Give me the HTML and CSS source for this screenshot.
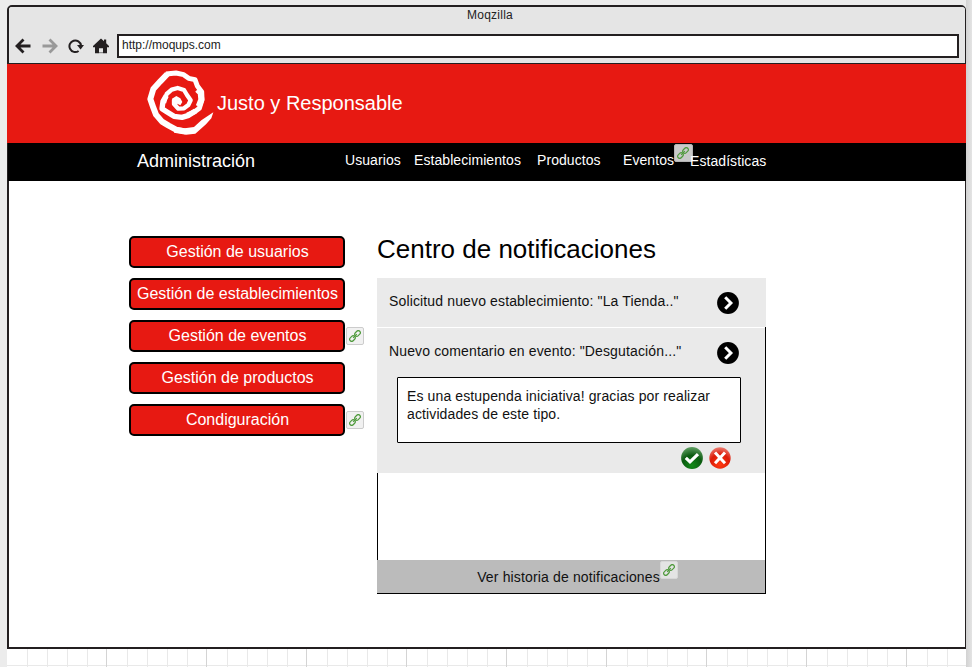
FILE: index.html
```html
<!DOCTYPE html>
<html lang="es">
<head>
<meta charset="utf-8">
<title>Justo y Responsable</title>
<link rel="stylesheet" href="styles.css">
</head>
<body>
<svg class="defs" width="0" height="0">
  <defs>
    <radialGradient id="green" cx="50%" cy="85%" r="85%"><stop offset="0" stop-color="#128a18"/><stop offset=".55" stop-color="#0b5a10"/><stop offset="1" stop-color="#5f9e62"/></radialGradient>
    <radialGradient id="red" cx="50%" cy="80%" r="85%"><stop offset="0" stop-color="#ff3a10"/><stop offset=".55" stop-color="#dc1c08"/><stop offset="1" stop-color="#ee8a80"/></radialGradient>
    <symbol id="link" viewBox="0 0 14 14">
      <g transform="rotate(-45 7 7)" fill="none" stroke="#4f9a3c" stroke-width="1.4">
        <rect x="-0.8" y="4.600" width="7.200" height="4.800" rx="2.400"/><rect x="7.600" y="4.600" width="7.200" height="4.800" rx="2.400"/><path d="M4 7h6"/>
      </g>
    </symbol>
    <symbol id="chevron" viewBox="0 0 22 22">
      <circle cx="11" cy="11" r="10.900"/><path d="M8.200 5.300 13.900 11l-5.700 5.700" fill="none" stroke="#fff" stroke-width="3"/>
    </symbol>
  </defs>
</svg>
<div class="canvas">
  <div class="window">
    <header class="chrome">
      <div class="title">Moqzilla</div>
      <div class="toolbar">
        <svg class="tool back" viewBox="0 0 16 16"><path d="M8.500 1.500 2 8l6.500 6.500M2 8h13.500" fill="none" stroke="#231f20" stroke-width="2.800"/></svg>
        <svg class="tool forward" viewBox="0 0 16 16"><path d="M7.500 1.500 14 8l-6.500 6.500M14 8H.5" fill="none" stroke="#999" stroke-width="2.800"/></svg>
        <svg class="tool reload" viewBox="0 0 16 16"><path d="M10.600 13A5.800 5.800 0 1 1 13 7.500" fill="none" stroke="#231f20" stroke-width="2"/><path d="M9 7h7l-3.400 4.600z" fill="#231f20"/></svg>
        <svg class="tool home" viewBox="0 0 16 16"><path d="M8 .5 11 3.200V1.500h2.200v3.700L16 8v1.200h-2V15.200h-4v-5H6v5H2V9.200H0V8z" fill="#231f20"/><path d="M6 14.700H10" stroke="#777"/></svg>
        <div class="address">http://moqups.com</div>
      </div>
    </header>
    <div class="brand">
      <svg class="logo" viewBox="0 0 204 201" fill="none" stroke="#fff" stroke-linejoin="round">
        <path stroke-width="18" d="M64 15 43 37 22 60 13 90 22 116 30 137 48 158 68 170 90 182 118 187"/>
        <path stroke-width="15" d="M60 15 90 12 113 17 128 28 147 32 154 51 167 68 168 92 160 118 146 128 124 138"/>
        <path stroke-width="18" d="M154 62 164 72 166 92 158 112"/>
        <path stroke-width="16" d="M148 126 128 139 108 145 84 142 62 128 48 119 51 97 61 80"/>
        <path stroke-width="13" d="M54 102 62 75 77 62 95 57 114 63 123 78 134 94 127 108 114 118 97 119 84 105 84 92"/>
        <path fill="#fff" stroke="none" d="M78 89 91 81 103 88 109 99 103 109 94 104 93 119 80 107ZM202 130 196 148 180 166 164 180 148 194 120 197 84 191 89 174 116 178 144 174 166 154 184 142Z"/>
      </svg>
      <span class="brand-name">Justo y Responsable</span>
    </div>
    <nav class="nav">
      <span class="section">Administración</span>
      <a class="n1">Usuarios</a><a class="n2">Establecimientos</a><a class="n3">Productos</a><a class="n4">Eventos<i class="badge dim"><svg><use href="#link"/></svg></i></a><a class="n5">Estadísticas</a>
    </nav>
    <main class="content">
      <aside class="menu">
        <a class="button"><span>Gestión de usuarios</span></a>
        <a class="button"><span>Gestión de establecimientos</span></a>
        <a class="button"><span>Gestión de eventos</span><i class="badge"><svg><use href="#link"/></svg></i></a>
        <a class="button"><span>Gestión de productos</span></a>
        <a class="button"><span>Condiguración</span><i class="badge"><svg><use href="#link"/></svg></i></a>
      </aside>
      <section class="center">
        <h1>Centro de notificaciones</h1>
        <div class="item"><span>Solicitud nuevo establecimiento: "La Tienda.."</span><svg class="go"><use href="#chevron"/></svg></div>
        <div class="rest">
          <div class="item open">
            <div class="row"><span>Nuevo comentario en evento: "Desgutación..."</span><svg class="go"><use href="#chevron"/></svg></div>
            <div class="comment">Es una estupenda iniciativa! gracias por realizar<br>actividades de este tipo.</div>
            <div class="actions">
              <svg viewBox="0 0 22 22"><circle cx="11" cy="11" r="10.900" fill="url(#green)"/><path d="m4.800 10.800 4.200 4 8-7.600" fill="none" stroke="#fff" stroke-width="3.200"/></svg>
              <svg viewBox="0 0 22 22"><circle cx="11" cy="11" r="10.700" fill="url(#red)"/><path d="m6 5.500 10 10.800m0-10.800L6 16.300" fill="none" stroke="#fff" stroke-width="3"/></svg>
            </div>
          </div>
          <div class="blank"></div>
          <div class="history"><span>Ver historia de notificaciones<i class="badge"><svg><use href="#link"/></svg></i></span></div>
        </div>
      </section>
    </main>
  </div>
</div>
</body>
</html>
```
FILE: styles.css
```css
* { box-sizing: border-box; }
html, body { margin: 0; height: 667px; overflow: hidden; }
body {
  background: linear-gradient(90deg, #ececec 0 966px, #d2d2d2 966px, #e4e4e4 972px);
  font-family: "Liberation Sans", Arial, sans-serif;
  color: #000;
  padding: 0 6px 0 7px;
}
.defs { display: block; height: 0; }
.canvas {
  width: 959px;
  height: 667px;
  padding-top: 5px;
  background:
    linear-gradient(#ececec, #ececec) 0 0 / 100% 20px no-repeat,
    repeating-linear-gradient(90deg, transparent 0 99px, #d4d4d4 99px 100px),
    linear-gradient(#e9e9e9, #e9e9e9) 0 665px / 100% 1px no-repeat,
    repeating-linear-gradient(90deg, transparent 0 20px, #e9e9e9 20px 21px, transparent 21px 40px, #e9e9e9 40px 41px, transparent 41px 60px, #e9e9e9 60px 61px, transparent 61px 80px, #e9e9e9 80px 81px, transparent 81px 100px),
    #fff;
}
.window {
  height: 644px;
  display: flex;
  flex-direction: column;
  background: #fff;
  border: solid #231f20;
  border-width: 2px 1px 2px 2px;
  border-radius: 5px 5px 0 0;
}
.chrome { height: 57px; background: #e5e5e5; border-bottom: 1px solid #231f20; border-radius: 3px 3px 0 0; }
.title { height: 27px; padding: 0 5px 0 11px; line-height: 17px; font-size: 12px; text-align: center; letter-spacing: .25px; color: #222; }
.toolbar { display: flex; height: 24px; align-items: center; padding: 0 6px; }
.tool { width: 16px; height: 16px; flex: none; }
.forward { margin-left: 11px; }
.reload { margin-left: 10px; }
.home { margin-left: 9px; }
.address { flex: 1; margin-left: 8px; height: 24px; border: 2px solid #231f20; background: #fff; padding-left: 3px; font-size: 12px; line-height: 18px; color: #222; }
.brand { display: flex; margin: 0 -1px 0 -2px; height: 79px; background: #e71912; color: #fff; }
.logo { width: 68px; height: 67px; margin: 5px 0 0 139px; flex: none; }
.brand-name { margin-left: 3px; font-size: 20px; line-height: 78px; }
.nav { display: flex; margin: 0 -1px; height: 38px; background: #000; color: #fff; font-size: 14px; line-height: 34px; letter-spacing: .07px; white-space: nowrap; }
.nav a { position: relative; flex: none; }
.section { width: 208px; margin-left: 129px; font-size: 18px; line-height: 37px; letter-spacing: 0; flex: none; }
.n1 { width: 69px; }
.n2 { width: 123px; }
.n3 { width: 86px; }
.n4 { width: 67px; }
.n5 { line-height: 36px; }
.content { display: flex; padding: 55px 0 0 120px; }
.menu { width: 216px; display: flex; flex-direction: column; gap: 10px; }
.button { position: relative; display: block; height: 32px; padding-left: 1px; border: 2px solid #000; border-radius: 5px; background: #e71912; color: #fff; font-size: 16px; line-height: 27px; text-align: center; white-space: nowrap; }
.badge { position: absolute; width: 18px; height: 18px; padding: 2px; background: #f1f1f1; border: 1px solid #ccc; border-radius: 2px; }
.badge svg { display: block; width: 12px; height: 12px; overflow: visible; }
.button .badge { left: 215px; top: 5px; }
.nav .dim { left: 51px; top: 1px; width: 19px; background: #c9c9c9; border-color: #b3b3b3; }
.center { width: 389px; margin-left: 32px; }
h1 { margin: 0; height: 42px; font-size: 26px; line-height: 27px; font-weight: normal; white-space: nowrap; }
.item { display: flex; height: 49px; background: #eaeaea; padding: 0 27px 0 12px; font-size: 14px; line-height: 47px; letter-spacing: .14px; color: #111; }
.item span { flex: 1; white-space: nowrap; }
.go { width: 22px; height: 22px; margin-top: 14px; }
.rest { height: 267px; border: solid #000; border-width: 0 1px 1px 1px; }
.open { display: block; height: 146px; margin-left: -1px; border-top: 1px solid #fff; padding: 0 24px 0 20px; }
.row { display: flex; height: 49px; margin: 0 -2px 0 -8px; padding-right: 4px; }
.comment { height: 66px; border: 1px solid #000; border-radius: 1px; background: #fff; padding: 9px; line-height: 18px; letter-spacing: .12px; white-space: nowrap; }
.actions { display: flex; gap: 6px; justify-content: flex-end; padding: 4px 10px 0 0; }
.actions svg { width: 22px; height: 22px; }
.blank { height: 87px; }
.history { height: 33px; margin-left: -1px; padding-right: 5px; background: #bbb; font-size: 14px; line-height: 35px; letter-spacing: .15px; text-align: center; color: #111; }
.history span { position: relative; white-space: nowrap; }
.history .badge { left: 183px; top: -8px; border-color: #d8d8d8; background: #e4e4e4; }
```
